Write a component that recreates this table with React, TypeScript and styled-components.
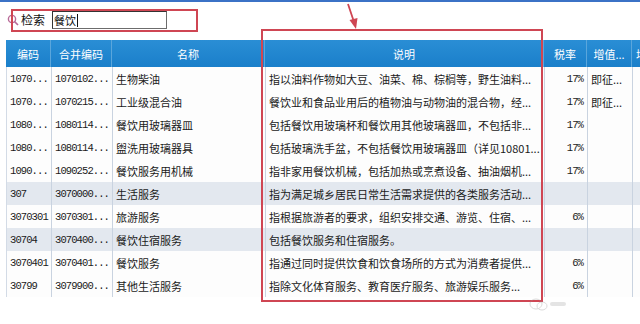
import React from 'react';
import styled, { createGlobalStyle } from 'styled-components';

const Global = createGlobalStyle`
  html, body { margin: 0; padding: 0; background: #ffffff; }
  body { width: 640px; height: 324px; overflow: hidden; font-family: "Noto Sans CJK SC", "Noto Sans", sans-serif; }
`;

const RED = '#cf4653';

const Page = styled.div`
  position: relative;
  width: 640px;
  height: 324px;
  overflow: hidden;
  background: #fff;
`;

const TopBar = styled.div`
  height: 2px;
  background: #3b72c6;
`;

const SearchRow = styled.div`
  display: flex;
  align-items: center;
  height: 22px;
  margin-top: 7px;
  padding-left: 7px;
`;

const SearchIcon = styled.svg`
  width: 12px;
  height: 12px;
  flex: none;
`;

const Label = styled.span`
  margin-left: 2px;
  font-size: 12px;
  color: #111;
  line-height: 22px;
`;

const Input = styled.div`
  margin-left: 7px;
  width: 112px;
  height: 16px;
  border: 1px solid #6c6c6c;
  border-top-color: #333;
  border-left-color: #333;
  background: #fff;
  display: flex;
  align-items: center;
  padding-left: 1px;
  font-size: 11px;
  color: #111;
`;

const Caret = styled.span`
  width: 1px;
  height: 13px;
  background: #111;
  margin-left: 1px;
`;

const TableArea = styled.div`
  margin-top: 9px;
  margin-left: 6px;
  width: 680px;
`;

const cols = '45px 61px 153px 279px 43px 45px 60px';

const HeaderRow = styled.div`
  display: grid;
  grid-template-columns: ${cols};
  height: 27px;
  background: linear-gradient(#2a8ed5, #1a7fca);
`;

const HeaderCell = styled.div<{ $left?: boolean }>`
  display: flex;
  align-items: center;
  justify-content: ${p => (p.$left ? 'flex-start' : 'center')};
  padding-left: ${p => (p.$left ? '4px' : '0')};
  color: #fff;
  font-size: 11px;
  border-right: 1px solid #5aa6dc;
  white-space: nowrap;
  overflow: hidden;
`;

const Row = styled.div<{ $shade?: boolean }>`
  display: grid;
  grid-template-columns: ${cols};
  height: 23px;
  background: ${p => (p.$shade ? '#e3e8ef' : '#fdfdfd')};
  border-left: 1px solid #d3dbe6;
`;

const Cell = styled.div<{ $align?: 'right' | 'left'; $mono?: boolean }>`
  display: flex;
  align-items: center;
  justify-content: ${p => (p.$align === 'right' ? 'flex-end' : 'flex-start')};
  padding: ${p => (p.$align === 'right' ? '0 4px 0 0' : '0 0 0 3px')};
  font-family: ${p => (p.$mono ? '"Liberation Mono", "DejaVu Sans Mono", monospace' : 'inherit')};
  font-size: ${p => (p.$mono ? '10.5px' : '11px')};
  letter-spacing: ${p => (p.$mono ? '-0.9px' : '0')};
  color: #1a1a1a;
  border-right: 1px solid #c9d3e0;
  white-space: nowrap;
  overflow: hidden;
`;

const Box = styled.div<{ $x: number; $y: number; $w: number; $h: number }>`
  position: absolute;
  left: ${p => p.$x}px;
  top: ${p => p.$y}px;
  width: ${p => p.$w}px;
  height: ${p => p.$h}px;
  border: 2px solid ${RED};
  box-sizing: border-box;
  pointer-events: none;
`;

const Arrow = styled.svg`
  position: absolute;
  left: 340px;
  top: 2px;
  width: 24px;
  height: 30px;
`;

const Watermark = styled.svg`
  position: absolute;
  left: 528px;
  top: 296px;
  width: 40px;
  height: 16px;
  opacity: 0.35;
`;

const headers = ['编码', '合并编码', '名称', '说明', '税率', '增值...', '增'];

const rows: { c: string[]; shade?: boolean }[] = [
  { c: ['1070...', '1070102...', '生物柴油', '指以油料作物如大豆、油菜、棉、棕榈等，野生油料...', '17%', '即征...'] },
  { c: ['1070...', '1070215...', '工业级混合油', '餐饮业和食品业用后的植物油与动物油的混合物，经...', '17%', '即征...'] },
  { c: ['1080...', '1080114...', '餐饮用玻璃器皿', '包括餐饮用玻璃杯和餐饮用其他玻璃器皿，不包括非...', '17%', ''] },
  { c: ['1080...', '1080114...', '盥洗用玻璃器具', '包括玻璃洗手盆，不包括餐饮用玻璃器皿（详见10801...', '17%', ''] },
  { c: ['1090...', '1090252...', '餐饮服务用机械', '指非家用餐饮机械，包括加热或烹煮设备、抽油烟机...', '17%', ''] },
  { c: ['307', '3070000...', '生活服务', '指为满足城乡居民日常生活需求提供的各类服务活动...', '', ''], shade: true },
  { c: ['3070301', '3070301...', '旅游服务', '指根据旅游者的要求，组织安排交通、游览、住宿、...', '6%', ''] },
  { c: ['30704', '3070400...', '餐饮住宿服务', '包括餐饮服务和住宿服务。', '', ''], shade: true },
  { c: ['3070401', '3070401...', '餐饮服务', '指通过同时提供饮食和饮食场所的方式为消费者提供...', '6%', ''] },
  { c: ['30799', '3079900...', '其他生活服务', '指除文化体育服务、教育医疗服务、旅游娱乐服务...', '6%', ''] },
];

export default function App() {
  return (
    <Page>
      <Global />
      <TopBar />
      <SearchRow>
        <SearchIcon viewBox="0 0 12 12">
          <circle cx="5" cy="5" r="3.6" fill="none" stroke="#b86a98" strokeWidth="1.4" />
          <line x1="7.6" y1="7.6" x2="11" y2="11" stroke="#b86a98" strokeWidth="1.6" />
        </SearchIcon>
        <Label>检索</Label>
        <Input>
          餐饮
          <Caret />
        </Input>
      </SearchRow>
      <TableArea>
        <HeaderRow>
          {headers.map((h, i) => (
            <HeaderCell key={i} $left={i === 6}>{h}</HeaderCell>
          ))}
        </HeaderRow>
        {rows.map((r, i) => (
          <Row key={i} $shade={r.shade}>
            <Cell $mono>{r.c[0]}</Cell>
            <Cell $mono>{r.c[1]}</Cell>
            <Cell>{r.c[2]}</Cell>
            <Cell>{r.c[3]}</Cell>
            <Cell $align="right" $mono>{r.c[4]}</Cell>
            <Cell>{r.c[5]}</Cell>
            <Cell />
          </Row>
        ))}
      </TableArea>
      <Box $x={11} $y={9} $w={187} $h={23} />
      <Box $x={261} $y={29} $w={282} $h={273} />
      <Arrow viewBox="0 0 24 30">
        <line x1="8" y1="2" x2="14" y2="20" stroke={RED} strokeWidth="1.8" />
        <polygon points="9.5,18 17.5,16 16,27" fill={RED} />
      </Arrow>
      <Watermark viewBox="0 0 40 16">
        <ellipse cx="8" cy="8" rx="6" ry="5" fill="none" stroke="#9a9a9a" strokeWidth="1" />
        <ellipse cx="14" cy="10" rx="5" ry="4" fill="none" stroke="#9a9a9a" strokeWidth="1" />
        <rect x="22" y="6" width="16" height="4" rx="2" fill="#b5b5b5" />
      </Watermark>
    </Page>
  );
}
